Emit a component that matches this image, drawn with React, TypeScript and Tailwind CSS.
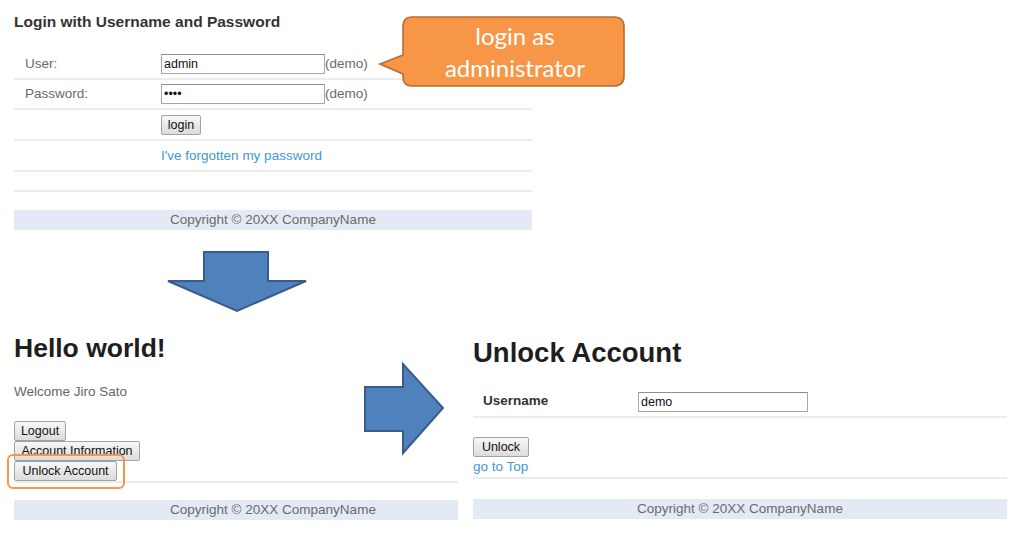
import React from "react";

const btn =
  "h-[20px] box-border border border-[#a3a3a3] rounded-[2px] bg-gradient-to-b from-[#f7f7f7] to-[#dcdcdc] text-[12.5px] leading-[18px] text-[#111] text-center whitespace-nowrap";
const input =
  "h-[20px] box-border border border-[#a8a8a8] border-t-[#8e8e8e] bg-white text-[12.5px] leading-[18px] text-[#111] pl-[2px]";
const bar =
  "h-[20px] bg-[#e3eaf6] text-[13.5px] leading-[20px] text-[#6a6a6a] text-center";

function DownArrow() {
  return (
    <svg
      className="absolute left-[160px] top-[245px]"
      width="155"
      height="75"
      viewBox="0 0 155 75"
    >
      <polygon
        points="44,7 108,7 108,36 146,36 77,66 8,36 44,36"
        fill="#4F81BD"
        stroke="#385D8A"
        strokeWidth="2"
        strokeLinejoin="miter"
      />
    </svg>
  );
}

function RightArrow() {
  return (
    <svg
      className="absolute left-[355px] top-[355px]"
      width="100"
      height="110"
      viewBox="0 0 100 110"
    >
      <polygon
        points="10,32 48,32 48,9 88,53 48,98 48,76 10,76"
        fill="#4F81BD"
        stroke="#385D8A"
        strokeWidth="2"
      />
    </svg>
  );
}

function Callout() {
  return (
    <div className="absolute left-[376px] top-[14px] w-[252px] h-[76px]">
      <svg
        className="absolute inset-0"
        width="252"
        height="76"
        viewBox="0 0 252 76"
      >
        <path
          d="M36,3 H238 Q248,3 248,13 V62 Q248,72 238,72 H36 Q27,72 27,63 V60 L4,50 L27,41 V13 Q27,3 36,3 Z"
          fill="#F79646"
          stroke="#B66D31"
          strokeWidth="1.6"
        />
      </svg>
      <div className="relative pl-[26px] w-full pt-[6px] flex flex-col items-center text-white text-[24px] leading-[32px] font-['Lato',sans-serif]">
        <span>login as</span>
        <span>administrator</span>
      </div>
    </div>
  );
}

function LoginPanel() {
  const row = "flex items-center h-[30px] box-border border-b-2 border-[#ececec]";
  return (
    <div className="absolute left-[14px] top-0 w-[518px]">
      <h2 className="pt-[13px] text-[15.5px] leading-[18px] font-bold text-[#333]">
        Login with Username and Password
      </h2>
      <div className="mt-[19px] text-[13.5px] text-[#6a6a6a]">
        <div className={row}>
          <div className="w-[147px] pl-[11px]">User:</div>
          <input readOnly value="admin" className={`${input} w-[164px]`} />
          <span>(demo)</span>
        </div>
        <div className={row}>
          <div className="w-[147px] pl-[11px]">Password:</div>
          <input readOnly value="••••" className={`${input} w-[164px]`} />
          <span>(demo)</span>
        </div>
        <div className={`${row} h-[31px]`}>
          <div className="w-[147px]" />
          <button className={`${btn} w-[40px]`}>login</button>
        </div>
        <div className={`${row} h-[31px] pt-[2px]`}>
          <div className="w-[147px]" />
          <a className="text-[#4298d3]">I've forgotten my password</a>
        </div>
        <div className="h-[20px] box-border border-b-2 border-[#ececec]" />
      </div>
      <div className={`${bar} mt-[18px]`}>Copyright © 20XX CompanyName</div>
    </div>
  );
}

function HelloPanel() {
  return (
    <div className="absolute left-[14px] top-[320px] w-[444px] overflow-hidden">
      <div className="w-[518px]">
        <h1 className="mt-[13px] text-[26.5px] leading-[30px] font-bold text-[#1e1e1e]">
          Hello world!
        </h1>
        <p className="mt-[21px] text-[13.5px] leading-[16px] text-[#666]">
          Welcome Jiro Sato
        </p>
        <div className="mt-[21px] flex flex-col items-start border-b-2 border-[#ececec] w-[444px]">
          <button className={`${btn} w-[52px]`}>Logout</button>
          <button className={`${btn} w-[126px]`}>Account Information</button>
          <button className={`${btn} w-[103px]`}>Unlock Account</button>
        </div>
        <div className={`${bar} mt-[17px]`}>Copyright © 20XX CompanyName</div>
      </div>
    </div>
  );
}

function UnlockPanel() {
  return (
    <div className="absolute left-[473px] top-[320px] w-[534px]">
      <h1 className="mt-[17px] text-[27.5px] leading-[31px] font-bold text-[#1e1e1e]">
        Unlock Account
      </h1>
      <div className="mt-[19px] flex items-center h-[31px] box-border border-b-2 border-[#ececec]">
        <div className="w-[165px] pl-[10px] text-[13.5px] font-bold text-[#333]">Username</div>
        <input readOnly value="demo" className={`${input} w-[170px]`} />
      </div>
      <div className="pt-[19px] flex flex-col items-start border-b-2 border-[#ececec]">
        <button className={`${btn} w-[56px]`}>Unlock</button>
        <a className="text-[13.5px] leading-[20px] text-[#4298d3]">go to Top</a>
      </div>
      <div className={`${bar} mt-[20px]`}>Copyright © 20XX CompanyName</div>
    </div>
  );
}

export default function App() {
  return (
    <div className="relative w-[1022px] h-[534px] bg-white overflow-hidden font-['Liberation_Sans',Arial,sans-serif]">
      <LoginPanel />
      <Callout />
      <DownArrow />
      <HelloPanel />
      <RightArrow />
      <UnlockPanel />
      <div className="absolute left-[7px] top-[454px] w-[118px] h-[35px] border-2 border-[#F79646] rounded-[6px]" />
    </div>
  );
}
